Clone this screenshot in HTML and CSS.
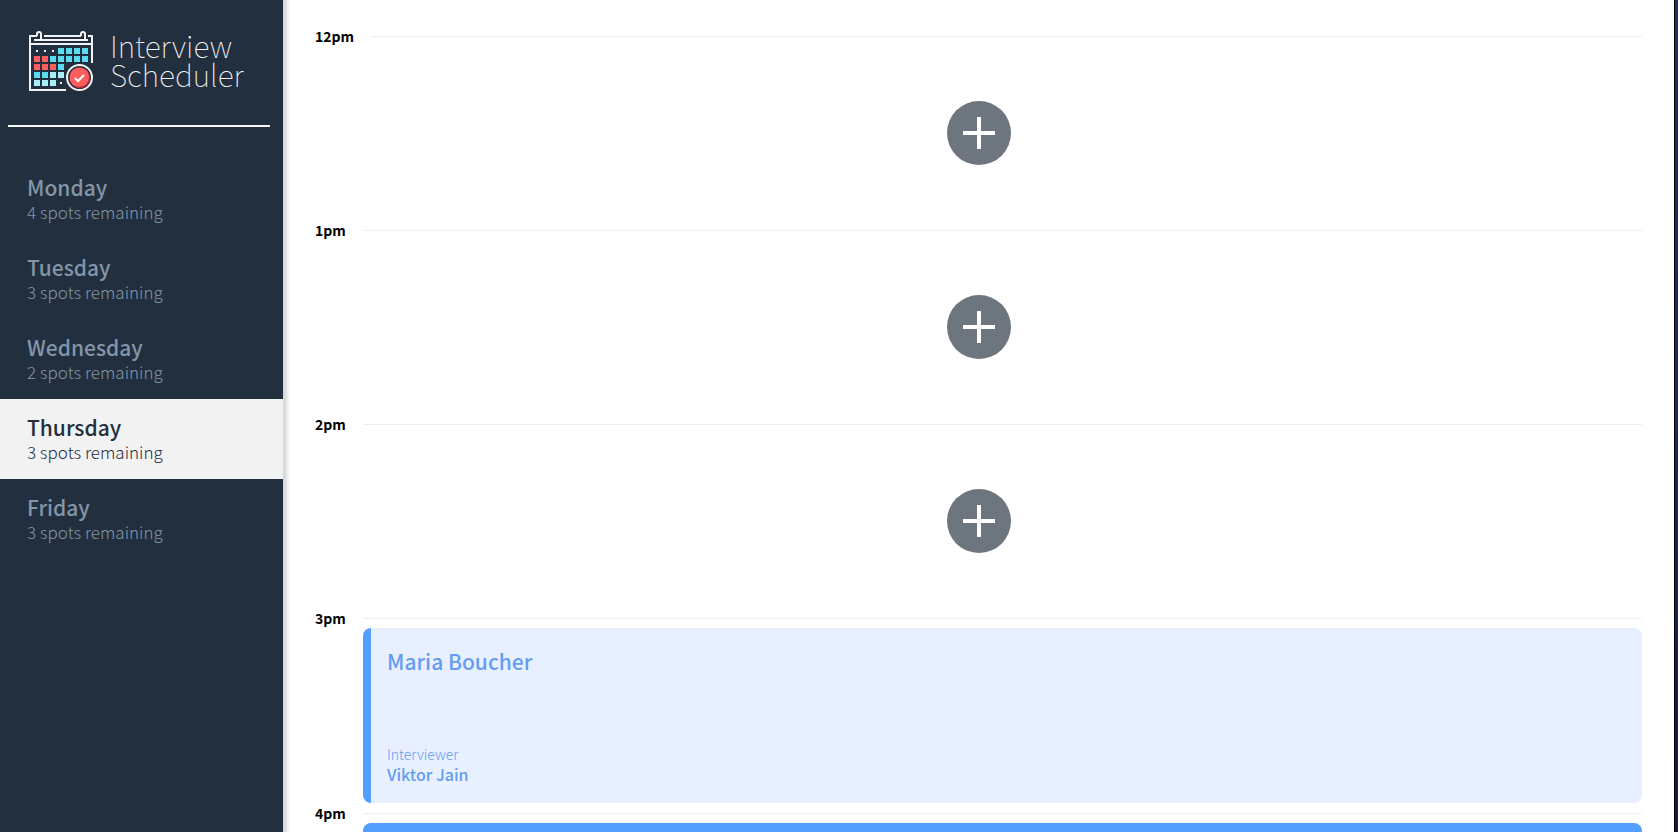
FILE: index.html
```html
<!DOCTYPE html>
<html lang="en">
<head>
    <meta charset="UTF-8">
    <meta name="viewport" content="width=device-width, initial-scale=1.0">
    <title>Interview Scheduler</title>
    <link rel="stylesheet" href="styles.css">
</head>
<body>
    <main class="layout">
        <section class="sidebar">
            <div class="logo">
                <svg class="logo-icon" viewBox="28 30 66 62" aria-hidden="true">
                    <!-- calendar frame -->
                    <g fill="none" stroke="#f2f2f7" stroke-width="2">
                        <path d="M37 36H30V90H66M44 36H81M88 36H92V63M30 44H92M34 40H88"/>
                        <path d="M37 36V34a2 2 0 0 1 4 0V40M81 36V34a2 2 0 0 1 4 0V40"/>
                    </g>
                    <g fill="#f2f2f7">
                        <path d="M36 50h2v2h-2zM44 50h2v2h-2zM52 50h2v2h-2zM60 82h2v2h-2z"/>
                    </g>
                    <!-- day cells -->
                    <path fill="#5cdcf2" d="M58 48h6v6h-6zM66 48h6v6h-6zM74 48h6v6h-6zM82 48h6v6h-6zM50 56h6v6h-6zM58 56h6v6h-6zM66 56h6v6h-6zM74 56h6v6h-6zM82 56h6v6h-6zM58 64h6v6h-6zM34 72h6v6h-6zM42 72h6v6h-6z"/>
                    <path fill="#ff5d5d" d="M34 56h6v6h-6zM42 56h6v6h-6zM34 64h6v6h-6zM42 64h6v6h-6zM50 64h6v6h-6z"/>
                    <path fill="#a5f0fb" d="M50 72h6v6h-6zM58 72h6v6h-6zM34 80h6v6h-6zM42 80h6v6h-6zM50 80h6v6h-6z"/>
                    <!-- check badge -->
                    <circle cx="79.5" cy="77.5" r="12.5" fill="#222f3e" stroke="#f2f2f7" stroke-width="2"/>
                    <circle cx="80" cy="78" r="10.4" fill="#a62b36"/>
                    <circle cx="79.3" cy="77.3" r="9.8" fill="#ff5d5d"/>
                    <path d="M74.8 78l3.2 3 6-6" fill="none" stroke="#fff" stroke-width="2"/>
                </svg>
                <h1 class="logo-text">Interview<br>Scheduler</h1>
            </div>
            <hr class="sidebar-separator">
            <nav>
                <ul class="day-list">
                    <li><button class="day" type="button"><span class="day-name">Monday</span><span class="day-spots">4 spots remaining</span></button></li>
                    <li><button class="day" type="button"><span class="day-name">Tuesday</span><span class="day-spots">3 spots remaining</span></button></li>
                    <li><button class="day" type="button"><span class="day-name">Wednesday</span><span class="day-spots">2 spots remaining</span></button></li>
                    <li><button class="day selected" type="button"><span class="day-name">Thursday</span><span class="day-spots">3 spots remaining</span></button></li>
                    <li><button class="day" type="button"><span class="day-name">Friday</span><span class="day-spots">3 spots remaining</span></button></li>
                </ul>
            </nav>
        </section>
        <section class="schedule">
            <article class="appointment">
                <header class="appointment-time"><h2>12pm</h2><hr></header>
                <div class="empty"><button class="add" type="button" aria-label="Add"><svg viewBox="0 0 64 64"><path d="M32 16V48M16 32H48"/></svg></button></div>
            </article>
            <article class="appointment">
                <header class="appointment-time"><h2>1pm</h2><hr></header>
                <div class="empty"><button class="add" type="button" aria-label="Add"><svg viewBox="0 0 64 64"><path d="M32 16V48M16 32H48"/></svg></button></div>
            </article>
            <article class="appointment">
                <header class="appointment-time"><h2>2pm</h2><hr></header>
                <div class="empty"><button class="add" type="button" aria-label="Add"><svg viewBox="0 0 64 64"><path d="M32 16V48M16 32H48"/></svg></button></div>
            </article>
            <article class="appointment">
                <header class="appointment-time"><h2>3pm</h2><hr></header>
                <div class="card">
                    <h3 class="card-student">Maria Boucher</h3>
                    <div>
                        <h4 class="card-label">Interviewer</h4>
                        <p class="card-interviewer">Viktor Jain</p>
                    </div>
                </div>
            </article>
            <article class="appointment">
                <header class="appointment-time"><h2>4pm</h2><hr></header>
                <div class="card card-filled"></div>
            </article>
        </section>
        <div class="edge"></div>
    </main>
</body>
</html>
```
FILE: styles.css
```css
* {
    box-sizing: border-box;
}
body {
    font-family: 'Noto Sans CJK JP', 'Noto Sans CJK SC', sans-serif;
    margin: 0;
    background: #fff;
    color: #000;
}
h1, h2, h3, h4, p, ul {
    margin: 0;
    padding: 0;
}
button {
    font-family: inherit;
    border: none;
    cursor: pointer;
}
.layout {
    display: flex;
    height: 100vh;
    overflow: hidden;
}

/* sidebar */
.sidebar {
    flex: 0 0 283px;
    background: #222f3e;
    box-shadow: 2px 0 4px 2px rgba(34, 47, 62, 0.2);
    z-index: 1;
}
.logo {
    display: flex;
    gap: 16px;
    padding: 30px 0 0 28px;
    height: 125px;
}
.logo-icon {
    width: 66px;
    height: 62px;
}
.logo-text {
    font-size: 30px;
    line-height: 29px;
    font-weight: 100;
    color: #f2f2f2;
    padding-top: 1px;
}
.sidebar-separator {
    height: 2px;
    border: none;
    background: #f8f8f8;
    margin: 0 13px 32px 8px;
}
.day-list {
    list-style: none;
}
.day {
    display: flex;
    flex-direction: column;
    justify-content: center;
    width: 100%;
    height: 80px;
    padding: 0 27px 2px;
    text-align: left;
    background: transparent;
    color: #8395a7;
}
.day.selected {
    background: #f2f2f2;
    color: #222f3e;
}
.day-name {
    font-size: 21px;
    line-height: 28px;
    font-weight: 500;
}
.day-spots {
    font-size: 17px;
    line-height: 22px;
    font-weight: 300;
}

/* schedule */
.schedule {
    flex: 1;
    padding: 26px 32px 0;
    overflow: hidden;
}
.appointment-time {
    display: flex;
    align-items: center;
    gap: 17px;
    height: 20px;
}
.appointment-time h2 {
    font-size: 14px;
    line-height: 20px;
    font-weight: 700;
}
.appointment-time hr {
    flex: 1;
    height: 1px;
    margin: 0;
    border: none;
    background: #eee;
}
.empty {
    display: flex;
    align-items: center;
    justify-content: center;
    height: 174px;
}
.add {
    width: 64px;
    height: 64px;
    padding: 0;
    border-radius: 50%;
    background: #6d757e;
}
.add svg {
    display: block;
    fill: none;
    stroke: #fff;
    stroke-width: 4;
}
.card {
    display: flex;
    flex-direction: column;
    justify-content: space-between;
    height: 175px;
    margin-left: 48px;
    padding: 17px 16px 19px;
    border-left: 8px solid #549eff;
    border-radius: 8px;
    background: #e8f0ff;
    color: #629df0;
}
.card-filled {
    background: #549eff;
}
.card-student {
    font-size: 21px;
    line-height: 32px;
    font-weight: 500;
}
.card-label {
    font-size: 14px;
    line-height: 20px;
    font-weight: 300;
}
.card-interviewer {
    font-size: 16px;
    line-height: 20px;
    font-weight: 500;
}

/* strip along the right side of the window */
.edge {
    flex: 0 0 4px;
    border-left: 1px solid #000;
    background: linear-gradient(#292b61, #202750 50%, #1c1838);
}
```
